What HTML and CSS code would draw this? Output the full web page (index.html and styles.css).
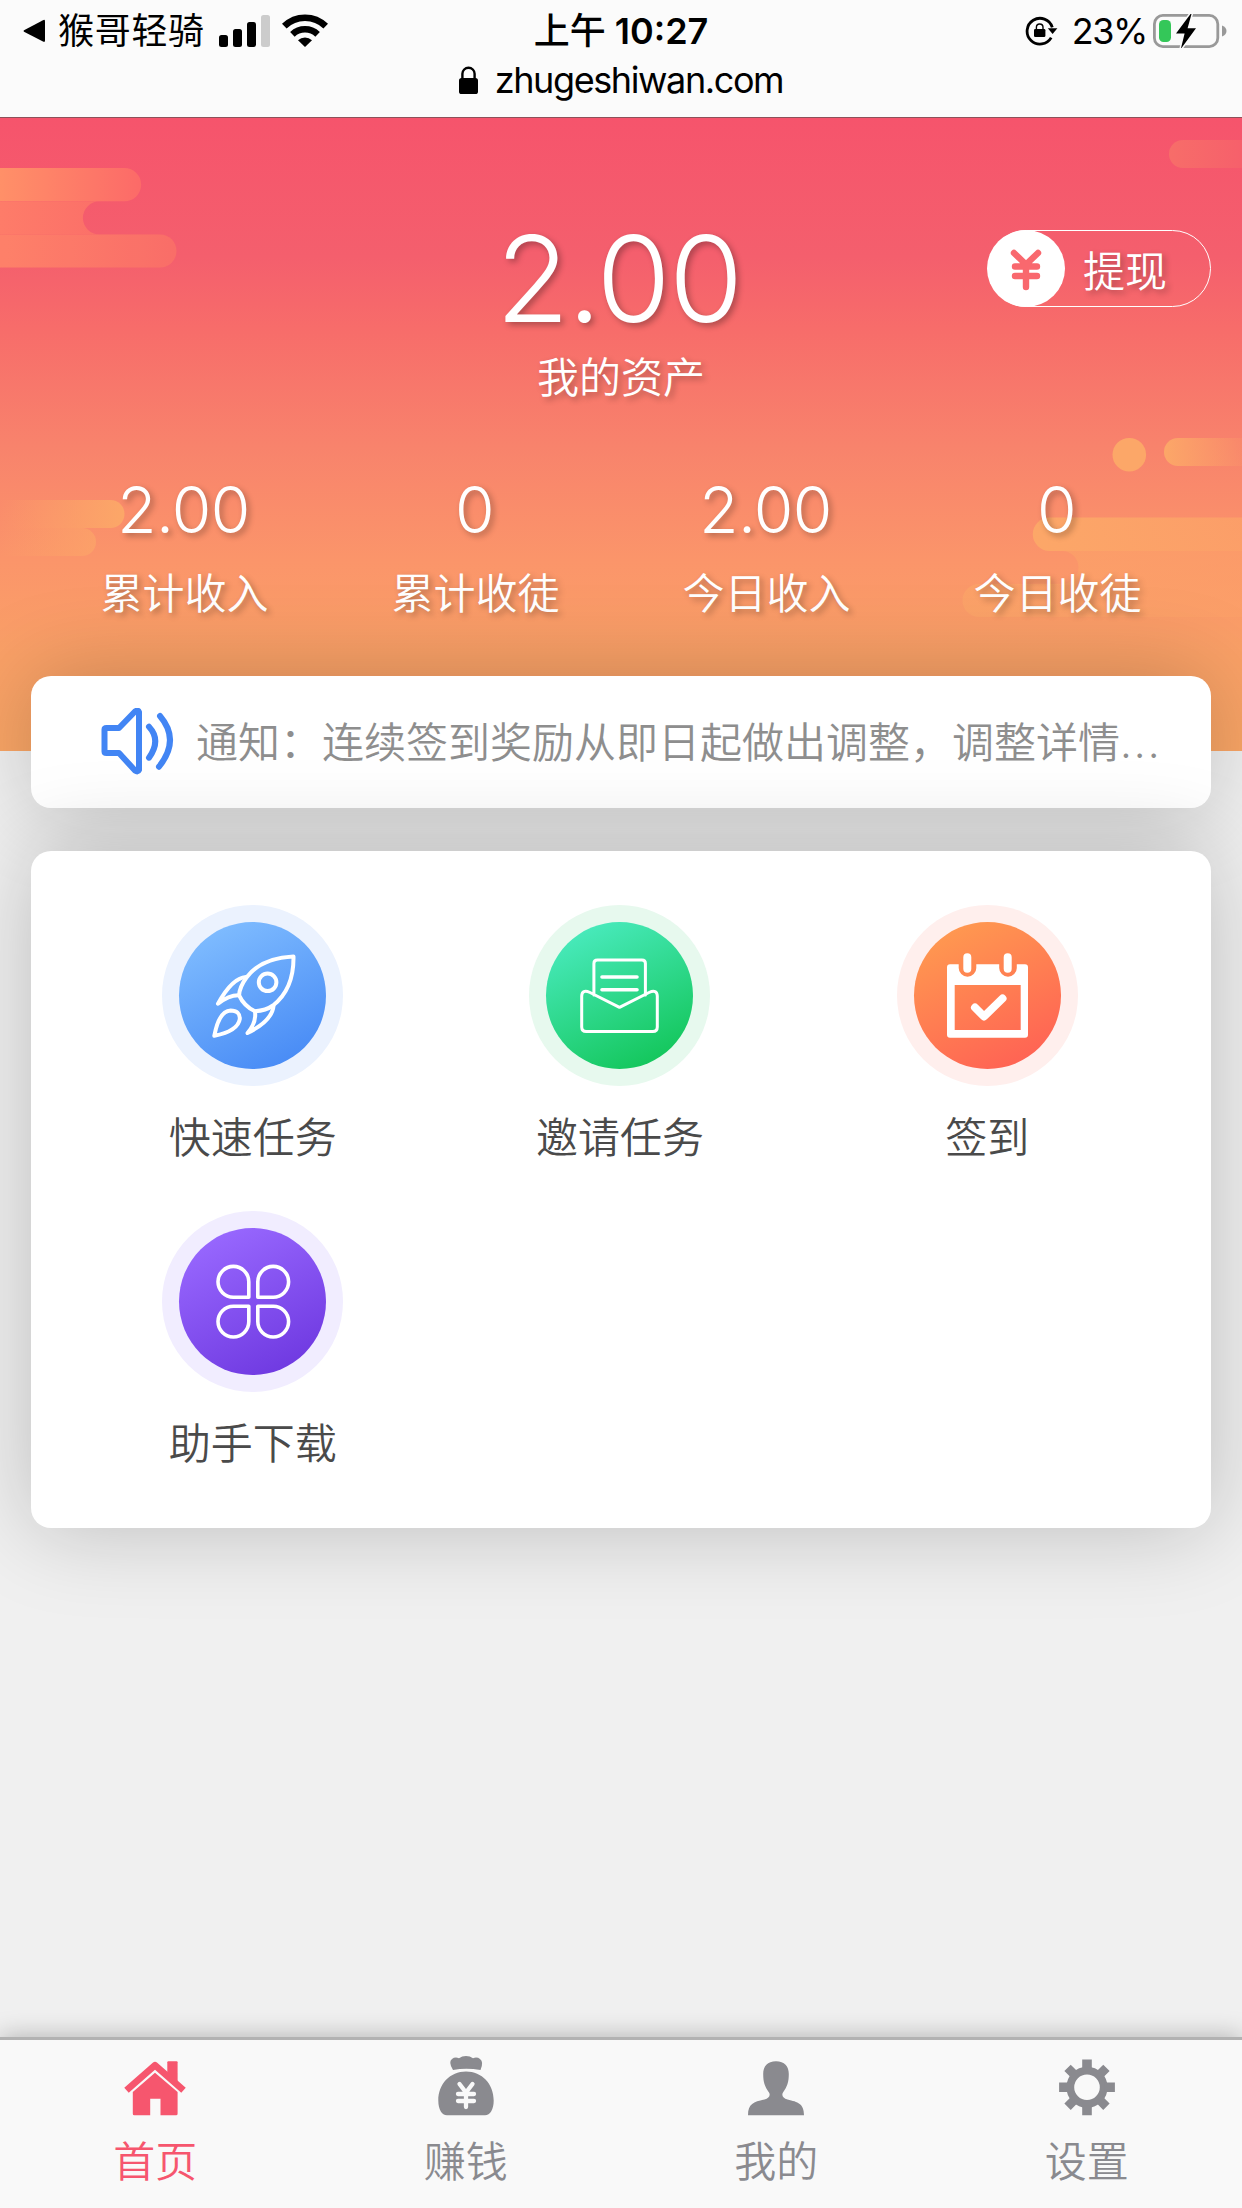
FILE: index.html
```html
<!DOCTYPE html>
<html lang="zh-CN">
<head>
<meta charset="utf-8">
<title>首页</title>
<link rel="stylesheet" href="styles.css">
</head>
<body>
<header class="browser-bar">
  <div class="status-row">
    <div class="status-left">
      <svg class="back-icon" width="22" height="24" viewBox="0 0 22 24"><path d="M1 11.2 20 1.2q2-1 2 1v19.4q0 2-2 1L1 12.8q-1-.8 0-1.6z"/></svg>
      <span class="back-app">猴哥轻骑</span>
      <svg class="signal-icon" width="51" height="32" viewBox="0 0 51 32"><rect y="20" width="9" height="12" rx="2.5"/><rect x="14" y="14" width="9" height="18" rx="2.5"/><rect x="28" y="7" width="9" height="25" rx="2.5"/><rect x="42" width="9" height="32" rx="2.5" fill="#ccc"/></svg>
      <svg class="wifi-icon" width="46" height="33" viewBox="0 0 46 33"><g fill="none" stroke="#000" stroke-width="6.6"><path d="M2.3 12.2a29.6 29.6 0 0 1 41.4 0"/><path d="M10.4 20.3a18.4 18.4 0 0 1 25.2 0"/></g><path d="M16 26.2a10.5 10.5 0 0 1 14 0L23 33z"/></svg>
    </div>
    <div class="status-time"><span class="day-part">上午</span> 10:27</div>
    <div class="status-right">
      <svg class="rotate-icon" width="33" height="30" viewBox="0 0 33 30"><path d="M27.3 11.3A12.9 12.9 0 1 0 26.2 21.6" fill="none" stroke="#000" stroke-width="2.8"/><path d="M22.8 12.2h9.6L27.6 18z"/><rect x="9" y="13" width="11.4" height="8" rx="1.3"/><path d="M11.4 13.5v-2.2a3.3 3.3 0 0 1 6.6 0v2.2" fill="none" stroke="#000" stroke-width="1.4"/></svg>
      <span class="battery-level">23%</span>
      <svg class="battery-icon" width="74" height="34" viewBox="0 0 74 34"><rect x="1.4" y="1.4" width="63.4" height="31.2" rx="8.5" fill="none" stroke="#999" stroke-width="2.8"/><path d="M69 11.5q4.5 1.8 4.5 5.5T69 22.5z" fill="#999"/><rect x="6" y="6" width="12" height="22" rx="4.5" fill="#34c759"/><path d="M37.5 0 23 19.5h8.6L27.8 35 43 14.2h-8.4L38.5 0z" fill="#000" stroke="#fbfbfb" stroke-width="3" paint-order="stroke"/></svg>
    </div>
  </div>
  <div class="address-row">
    <svg width="19" height="28" viewBox="0 0 19 28"><rect y="12" width="19" height="16" rx="2.6"/><path d="M3.4 13V7.8a6.1 6.1 0 0 1 12.2 0V13" fill="none" stroke="#000" stroke-width="2.4"/></svg>
    <span class="address">zhugeshiwan.com</span>
  </div>
</header>

<main class="page">
  <section class="hero">
    <svg class="hero-clouds" width="1242" height="633" viewBox="0 118 1242 633">
      <defs>
        <linearGradient id="cloud-warm"><stop stop-color="#ff9068"/><stop offset="1" stop-color="#fc6a68"/></linearGradient>
        <linearGradient id="cloud-warm-low" gradientUnits="userSpaceOnUse" x1="0" y1="0" x2="177" y2="0"><stop stop-color="#fe7c69"/><stop offset="1" stop-color="#f96668"/></linearGradient>
        <linearGradient id="cloud-gold"><stop stop-color="#fca768" stop-opacity="0"/><stop offset="1" stop-color="#fca768"/></linearGradient>
        <linearGradient id="cloud-gold-out"><stop stop-color="#fca768"/><stop offset="1" stop-color="#fca768" stop-opacity=".15"/></linearGradient>
        <linearGradient id="cloud-gold-wide"><stop stop-color="#fca768"/><stop offset="1" stop-color="#fca268" stop-opacity=".8"/></linearGradient>
        <linearGradient id="cloud-rose"><stop stop-color="#f76d69"/><stop offset="1" stop-color="#f6606b"/></linearGradient>
      </defs>
      <path d="M0 168h124.500a16.500 16.500 0 0 1 0 33.300H0z" fill="url(#cloud-warm)"/>
      <path d="M0 201.300h99.500a16.600 16.600 0 0 0 0 33.200H0z" fill="url(#cloud-warm-low)"/>
      <path d="M0 234.500h160a16.500 16.500 0 0 1 0 33H0z" fill="url(#cloud-warm-low)"/>
      <path d="M0 234.500h160a16.500 16.500 0 0 1 0 33H0z" fill="#fca768" opacity=".12"/>
      <path d="M0 500h110.500a14 14 0 0 1 0 28H0z" fill="url(#cloud-gold)"/>
      <path d="M0 528h82a14 14 0 0 1 0 28H0z" fill="url(#cloud-gold)" opacity=".65"/>
      <path d="M1242 140h-59a14 14 0 0 0 0 28h59z" fill="url(#cloud-rose)"/>
      <circle cx="1129.300" cy="454.700" r="16.800" fill="#fca768"/>
      <path d="M1242 438h-64a14 14 0 0 0 0 28h64z" fill="url(#cloud-gold-out)"/>
      <path d="M1242 517.500h-192.500a16.700 16.700 0 0 0 0 33.400h192.500z" fill="url(#cloud-gold-wide)"/>
      <path d="M1242 550.900h-180a16.500 16.500 0 0 1 0 33h-83a16.500 16.500 0 0 0 0 33h263z" fill="url(#cloud-gold-wide)" opacity=".6"/>
    </svg>
    <div class="asset">
      <div class="asset-value">2.00</div>
      <div class="asset-label">我的资产</div>
    </div>
    <div class="stats">
      <div class="stat"><div class="stat-value">2.00</div><div class="stat-label">累计收入</div></div>
      <div class="stat"><div class="stat-value">0</div><div class="stat-label">累计收徒</div></div>
      <div class="stat"><div class="stat-value">2.00</div><div class="stat-label">今日收入</div></div>
      <div class="stat"><div class="stat-value">0</div><div class="stat-label">今日收徒</div></div>
    </div>
    <div class="withdraw">
      <svg class="withdraw-icon" width="78" height="77" viewBox="0 0 78 77"><ellipse cx="39" cy="38.500" rx="39" ry="38.500" fill="#fff"/><path d="M27 23l12 11.500L51 23M28 36.500h22M28 46h22M39 35v22" fill="none" stroke="#f9686e" stroke-width="6.400" stroke-linecap="round" stroke-linejoin="round"/></svg>
      <span>提现</span>
    </div>
  </section>

  <section class="notice card">
    <svg class="notice-icon" width="74" height="68" viewBox="0 0 74 68" fill="none" stroke="#4285f4" stroke-width="6" stroke-linejoin="round" stroke-linecap="round"><path d="M3.500 21.500q0-1.500 2-1.500H18L34 3.500q3-2 4 .500v58q-1 2.500-4 .500L18 45H5.500q-2 0-2-1.500z"/><path d="M48 18.700q12.500 13.500 0 31M59 8q20.500 24 -1 50.700"/></svg>
    <p class="notice-text">通知：连续签到奖励从即日起做出调整，调整详情<span class="notice-more">...</span></p>
  </section>

  <section class="menu card">
    <a class="menu-item">
      <svg width="181" height="181" viewBox="0 0 181 181">
        <defs><linearGradient id="blue" x1=".25" y1="0" x2=".75" y2="1"><stop stop-color="#80bdff"/><stop offset="1" stop-color="#478af5"/></linearGradient></defs>
        <circle cx="90.500" cy="90.500" r="90.500" fill="#ebf2fe"/><circle cx="90.500" cy="90.500" r="73.500" fill="url(#blue)"/>
        <g fill="none" stroke="#fff" stroke-width="4" stroke-linejoin="round" stroke-linecap="round"><path d="M131.500 51.500Q99 53 84.500 72.500 77.500 82 77.100 90.300 82 101 93 106.300 104 105.500 111 100.500 132 84 131.500 51.500z"/><circle cx="105.600" cy="77.300" r="8.800"/><path d="M84 72Q70 73 56 98.800 67 90 77 90.300M111.500 101Q110 116 85.500 128 94.500 118 93 106.500M52.300 130.800Q57 106 68.600 105.500 78 105.500 77.800 114 76 126 52.300 130.800z"/></g>
      </svg>
      <span>快速任务</span>
    </a>
    <a class="menu-item">
      <svg width="181" height="181" viewBox="0 0 181 181">
        <defs><linearGradient id="green" x1=".25" y1="0" x2=".75" y2="1"><stop stop-color="#4aebbf"/><stop offset="1" stop-color="#12c558"/></linearGradient></defs>
        <circle cx="90.500" cy="90.500" r="90.500" fill="#e7f9ee"/><circle cx="90.500" cy="90.500" r="73.500" fill="url(#green)"/>
        <g fill="none" stroke="#fff" stroke-width="3" stroke-linejoin="round" stroke-linecap="round"><path d="M64.900 90V58.500q0-3.500 3.500-3.500h44.500q3.500 0 3.500 3.500V90M90.500 102.300 61 87.500q-8-3.500-8.300 3.500v31q0 4.500 4.500 4.500h66.600q4.500 0 4.500-4.500V91q-.3-7-8.300-3.500z"/><path d="M73 72h35M73 84.700h35" stroke-width="3.600"/></g>
      </svg>
      <span>邀请任务</span>
    </a>
    <a class="menu-item">
      <svg width="181" height="181" viewBox="0 0 181 181">
        <defs><linearGradient id="orange" x1=".25" y1="0" x2=".75" y2="1"><stop stop-color="#ff9a50"/><stop offset="1" stop-color="#ff6154"/></linearGradient></defs>
        <circle cx="90.500" cy="90.500" r="90.500" fill="#ffefed"/><circle cx="90.500" cy="90.500" r="73.500" fill="url(#orange)"/>
        <path fill="#fff" fill-rule="evenodd" d="M53 59.300h8.700v3.600a8.800 8.800 0 0 0 17.600 0v-3.600h22.900v3.600a8.800 8.800 0 0 0 17.600 0v-3.600h8.200q3 0 3 3v67.400q0 3-3 3H53q-3 0-3-3V62.300q0-3 3-3zM57.700 80v45h66V80z"/>
        <path d="M70.300 52.300v11.400M110.700 52.300v11.400M78 102.500l9 9 18.500-18" fill="none" stroke="#fff" stroke-width="8" stroke-linecap="round" stroke-linejoin="round"/>
      </svg>
      <span>签到</span>
    </a>
    <a class="menu-item">
      <svg width="181" height="181" viewBox="0 0 181 181">
        <defs><linearGradient id="purple" x1=".25" y1="0" x2=".75" y2="1"><stop stop-color="#9969ff"/><stop offset="1" stop-color="#6e38e0"/></linearGradient></defs>
        <circle cx="90.500" cy="90.500" r="90.500" fill="#f1edff"/><circle cx="90.500" cy="90.500" r="73.500" fill="url(#purple)"/>
        <g fill="none" stroke="#fff" stroke-width="3.600" stroke-linejoin="round"><path d="M86.800 86.200H71.400A15.400 15.400 0 1 1 86.800 70.800zM95.800 86.200V70.800a15.400 15.400 0 1 1 15.400 15.400zM86.800 95.200v15.400a15.400 15.400 0 1 1-15.400-15.400zM95.800 95.200h15.400a15.400 15.400 0 1 1-15.400 15.400z"/></g>
      </svg>
      <span>助手下载</span>
    </a>
  </section>
</main>

<nav class="tab-bar">
  <a class="tab tab-active">
    <svg width="66" height="60" viewBox="0 0 66 60"><path d="M45.300 17V6.300q0-1 1-1h8.300q1 0 1 1V29z"/><path d="M4.500 34.300 33 9.300l28.500 25" fill="none" stroke="currentColor" stroke-width="6.800" stroke-linejoin="round"/><path d="M33 16.800 55.600 36v21.800q0 1.500-1.500 1.500H38.500V42.700H28.200v16.600H12.300q-1.500 0-1.500-1.500V36z"/></svg>
    <span>首页</span>
  </a>
  <a class="tab">
    <svg width="66" height="60" viewBox="0 0 66 60"><path d="M20 14q-5-8-1-11 3-2.500 7-.8Q29 0 33 0t7 2.200q4-1.700 7 .8 4 3 .5 11-14.500-2.500-27.500 0z"/><path d="M33 15.600c16 0 27.700 12.400 27.700 29 0 9-3.500 14.700-8.700 14.700H14c-5.200 0-8.700-5.700-8.700-14.700 0-16.600 11.700-29 27.700-29z"/><path d="M26.500 28 33 36.500 39.500 28M25 38h16M25 45h16M33 37v14" fill="none" stroke="#f9f9f9" stroke-width="4.300" stroke-linecap="round"/></svg>
    <span>赚钱</span>
  </a>
  <a class="tab">
    <svg width="66" height="60" viewBox="0 0 66 60"><path d="M33 5.300c8.500 0 12.800 5 12.800 12.800 0 8-1.500 12.500-5.800 18.400-1.800 3 .2 5.500 4.500 7C55 46 61 47.500 61 59.300H5C5 47.500 11 46 21.500 43.500c4.300-1.500 6.300-4 4.500-7-4.300-5.900-5.800-10.400-5.800-18.400 0-7.800 4.300-12.800 12.800-12.800z"/></svg>
    <span>我的</span>
  </a>
  <a class="tab">
    <svg width="66" height="60" viewBox="0 0 66 60"><g transform="translate(33 31.300)"><circle r="16.700" fill="none" stroke="currentColor" stroke-width="7.800"/><path d="M-4.800-27.900h9.600v10h-9.600zM-4.800 17.900h9.600v10h-9.600zM-27.900-4.800v9.600h10v-9.600zM17.900-4.800v9.600h10v-9.600z"/><path transform="rotate(45)" d="M-4.500-27.500h9v10h-9zM-4.500 17.500h9v10h-9zM-27.500-4.500v9h10v-9zM17.500-4.500v9h10v-9z"/></g></svg>
    <span>设置</span>
  </a>
</nav>
</body>
</html>
```

FILE: styles.css
```css
* {
  box-sizing: border-box;
}

body {
  margin: 0;
  height: 2208px;
  display: flex;
  flex-direction: column;
  overflow: hidden;
  background: #f0f0f0;
  font-family: "Noto Sans CJK SC", sans-serif;
  font-weight: 350;
  font-size: 42px;
}

svg {
  display: block;
  flex: none;
}

.browser-bar {
  height: 118px;
  flex: none;
  background: #fbfbfb;
  border-bottom: 1px solid #8d5159;
  color: #000;
  font-family: Inter, "Noto Sans CJK SC", sans-serif;
  font-size: 36px;
  font-weight: 400;
}

.status-row {
  display: grid;
  grid-template-columns: 1fr auto 1fr;
  align-items: center;
  height: 62px;
  line-height: 62px;
  padding: 0 15px 0 23px;
}

.status-left,
.status-right {
  display: flex;
  align-items: center;
}

.status-right {
  justify-content: flex-end;
}

.back-app {
  margin: 0 14px 0 13px;
  letter-spacing: 0.7px;
}

.wifi-icon {
  margin-left: 12px;
  margin-bottom: 2px;
}

.status-time {
  margin-right: 8px;
  font-weight: 600;
}

.day-part {
  font-weight: 500;
}

.battery-level {
  margin: 0 6px 0 14px;
  letter-spacing: -1.4px;
}

.address-row {
  display: flex;
  justify-content: center;
  align-items: center;
  gap: 17px;
  height: 36px;
  line-height: 36px;
}

.address {
  letter-spacing: -1.4px;
}

.page {
  flex: 1;
}

.hero {
  position: relative;
  height: 633px;
  padding-top: 86px;
  color: #fff;
  background: linear-gradient(#f6546c 0%, #f45f6d 22%, #f76c6a 33%, #f8836c 52%, #fb956a 70%, #faa167 85%, #faa666 100%);
  text-shadow: 3px 3px 6px rgba(0, 0, 0, 0.3);
}

.hero-clouds {
  position: absolute;
  inset: 0;
}

.asset,
.stats {
  position: relative;
}

.asset {
  text-align: center;
}

.asset-value {
  margin-right: 5px;
  font-family: Inter, sans-serif;
  font-size: 120px;
  font-weight: 300;
  letter-spacing: -1.8px;
  line-height: 150px;
}

.asset-label {
  line-height: 42px;
}

.stats {
  display: grid;
  grid-template-columns: repeat(4, 1fr);
  margin: 69px 39px 0;
  text-align: center;
}

.stat-value {
  margin-right: 2px;
  font-family: Inter, sans-serif;
  font-size: 64px;
  font-weight: 300;
  letter-spacing: -0.6px;
  line-height: 90px;
}

.stat-label {
  line-height: 72px;
}

.withdraw {
  position: absolute;
  top: 112px;
  right: 31px;
  display: flex;
  align-items: center;
  gap: 18px;
  width: 223px;
  height: 77px;
  border: 1px solid #fff;
  border-radius: 39px;
}

.withdraw-icon {
  margin-left: -2px;
}

.card {
  position: relative;
  margin: 0 31px;
  border-radius: 20px;
  background: #fff;
  box-shadow: 0 0 90px rgba(0, 0, 0, 0.22);
}

.notice {
  display: flex;
  align-items: center;
  gap: 21px;
  height: 132px;
  margin-top: -75px;
  padding: 0 40px 0 70px;
  color: #8e8e8e;
}

.notice-text {
  margin: 0 0 6px;
  white-space: nowrap;
}

.notice-more {
  font-family: Inter, sans-serif;
  letter-spacing: 2px;
}

.menu {
  display: grid;
  grid-template-columns: repeat(3, 1fr);
  grid-auto-rows: 306px;
  height: 677px;
  margin-top: 43px;
  padding: 54px 40px 0 38px;
  color: #4a4a4a;
}

.menu-item {
  display: flex;
  flex-direction: column;
  align-items: center;
  gap: 18px;
  line-height: 62px;
}

.tab-bar {
  position: relative;
  display: grid;
  grid-template-columns: repeat(4, 1fr);
  flex: none;
  height: 171px;
  padding-top: 16px;
  border-top: 3px solid #b2b2b2;
  background: #f9f9f9;
  box-shadow: 0 0 24px rgba(0, 0, 0, 0.28);
}

.tab {
  display: flex;
  flex-direction: column;
  align-items: center;
  gap: 13px;
  color: #8a8a8f;
  line-height: 60px;
}

.tab svg {
  fill: currentColor;
}

.tab-active {
  color: #f6566e;
}
```
